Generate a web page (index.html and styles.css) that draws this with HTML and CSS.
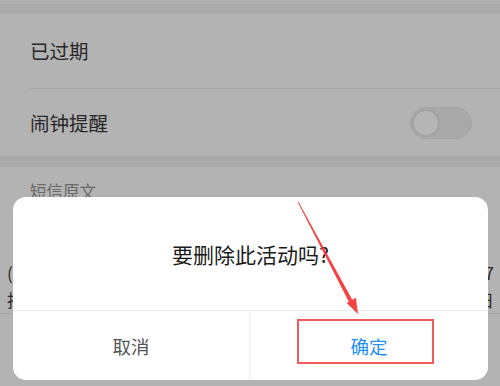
FILE: index.html
```html
<!DOCTYPE html>
<html lang="zh-CN">
<head>
<meta charset="utf-8">
<title>删除活动</title>
<link rel="stylesheet" href="styles.css">
</head>
<body>
<div class="screen">
  <div class="top-strip"></div>
  <div class="band"></div>
  <div class="row row-first">
    <span class="row-label">已过期</span>
  </div>
  <div class="inset-divider"></div>
  <div class="row row-second">
    <span class="row-label">闹钟提醒</span>
    <span class="toggle"><span class="knob"></span></span>
  </div>
  <div class="full-divider"></div>
  <div class="band"></div>
  <div class="section-label">短信原文</div>
  <div class="sms">
    <div class="sms-line"><span>(</span><span>7</span></div>
    <div class="sms-line"><span>指</span><span>日</span></div>
  </div>
</div>

<div class="dialog">
  <div class="dialog-title">要删除此活动吗?</div>
  <div class="dialog-actions">
    <div class="btn btn-cancel">取消</div>
    <div class="btn btn-ok">确定</div>
  </div>
</div>

<div class="highlight-box"></div>
<svg class="arrow" width="500" height="386" viewBox="0 0 500 386">
  <polygon points="297.6,202 298.6,202 353.5,302 350,304" fill="#f24444"/>
  <polygon points="358,314 355.9,297.8 346.6,302.9" fill="#f24444"/>
</svg>
</body>
</html>
```

FILE: styles.css
```css
html, body {
  margin: 0;
  padding: 0;
}
body {
  width: 500px;
  height: 386px;
  overflow: hidden;
  position: relative;
  background: #b3b3b3;
  font-family: "Noto Sans CJK SC", "Noto Sans", sans-serif;
}
.screen {
  display: flex;
  flex-direction: column;
}
.top-strip {
  height: 4px;
  background: #b1b1b1;
}
.band {
  height: 10px;
  background: #aaaaaa;
}
.row {
  display: flex;
  align-items: center;
  justify-content: space-between;
  padding: 0 28px 0 30px;
}
.row-first {
  height: 74px;
}
.row-second {
  height: 67px;
}
.row-label {
  font-size: 19.5px;
  color: #282828;
  line-height: 1;
}
.inset-divider {
  height: 1px;
  margin-left: 28px;
  background: #a6a6a6;
}
.full-divider {
  height: 1px;
  background: #a4a4a4;
}
.toggle {
  width: 62px;
  height: 32px;
  box-sizing: border-box;
  border-radius: 16px;
  background: #a9a9a9;
  border: 1px solid #a4a4a4;
  display: flex;
  align-items: center;
  padding-left: 1px;
}
.knob {
  width: 28px;
  height: 28px;
  box-sizing: border-box;
  border-radius: 50%;
  background: #b5b5b5;
  border: 2px solid #a2a2a2;
}
.section-label {
  height: 48px;
  display: flex;
  align-items: center;
  padding-left: 30px;
  font-size: 16.5px;
  color: #6a6a6a;
}
.sms {
  padding-top: 44px;
  border-bottom: 1px solid #a6a6a6;
}
.sms-line {
  display: flex;
  justify-content: space-between;
  padding: 0 6px 0 7px;
  height: 27px;
  line-height: 27px;
  font-size: 17px;
  color: #2c2c2c;
}
.dialog {
  position: absolute;
  left: 13px;
  top: 197px;
  width: 475px;
  height: 183px;
  background: #ffffff;
  border-radius: 13px;
  display: flex;
  flex-direction: column;
  overflow: hidden;
}
.dialog-title {
  height: 113px;
  display: flex;
  align-items: center;
  justify-content: center;
  font-size: 21px;
  color: #1a1a1a;
  border-bottom: 1px solid #e9e9e9;
}
.dialog-actions {
  flex: 1;
  display: grid;
  grid-template-columns: 237px 1fr;
}
.btn {
  display: flex;
  align-items: center;
  justify-content: center;
  font-size: 18.5px;
}
.btn-cancel {
  color: #555555;
  border-right: 1px solid #eeeeee;
}
.btn-ok {
  color: #1e8ff5;
}
.highlight-box {
  position: absolute;
  left: 297px;
  top: 319px;
  width: 137px;
  height: 45px;
  box-sizing: border-box;
  border: 2px solid #f25a5a;
}
.arrow {
  position: absolute;
  left: 0;
  top: 0;
  pointer-events: none;
}
```
